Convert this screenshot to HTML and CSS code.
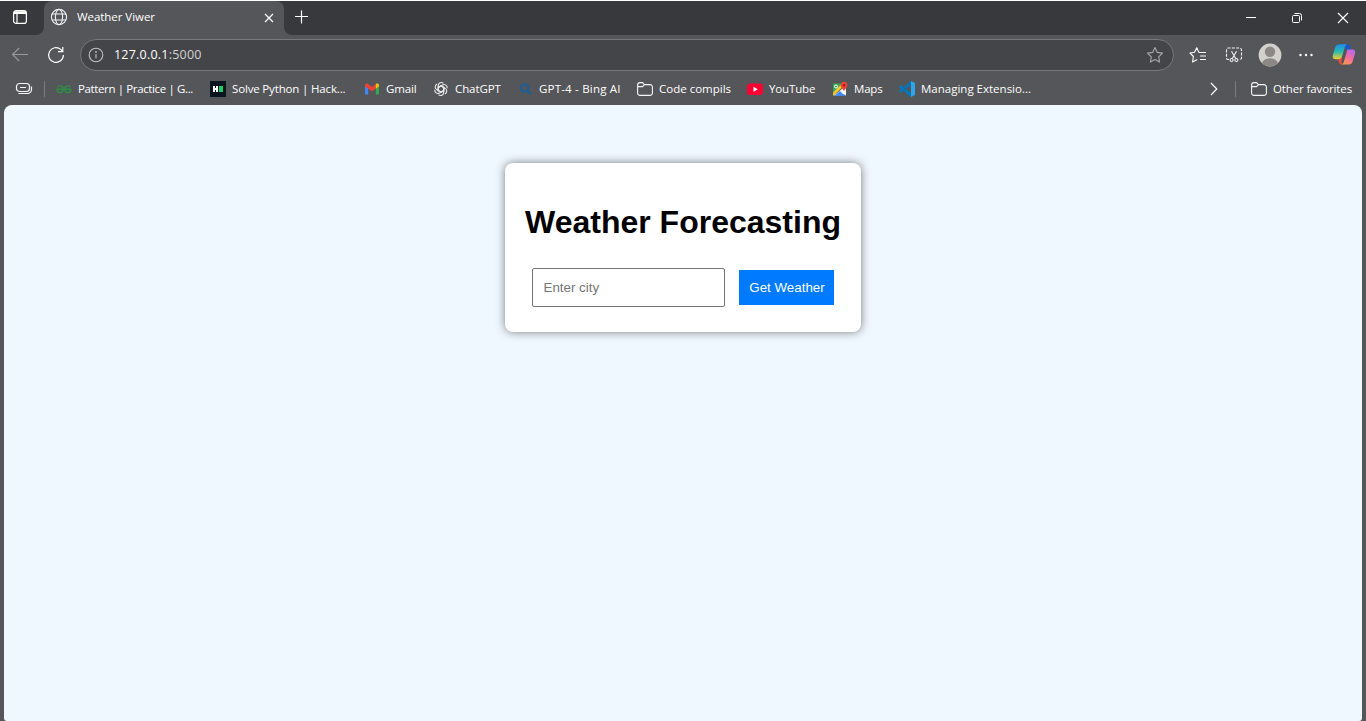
FILE: index.html
```html
<!DOCTYPE html>
<html lang="en">
<head>
<meta charset="utf-8">
<title>Weather Viwer</title>
<link rel="stylesheet" href="styles.css">
</head>
<body>
<div class="browser">
  <header class="tabstrip">
    <div class="workspaces"><svg width="16" height="16" viewBox="0 0 16 16" fill="none" stroke="#fff" stroke-width="1.2"><rect x="1.6" y="1.6" width="12.8" height="12.8" rx="2.5"/><path d="M1.6 4.5h12.8M5 4.5v10" /><path d="M2 3.2h12" stroke-width="2"/></svg></div>
    <div class="tab">
      <svg width="18" height="18" viewBox="0 0 18 18" fill="none" stroke="#f2f2f2" stroke-width="1.1"><circle cx="9" cy="9" r="7.6"/><ellipse cx="9" cy="9" rx="3.6" ry="7.6"/><path d="M2 6h14M2 12h14"/></svg>
      <span class="tab-title">Weather Viwer</span>
      <svg class="tab-close" width="10" height="10" viewBox="0 0 10 10" stroke="#fff" stroke-width="1.2"><path d="M1 1l8 8M9 1l-8 8"/></svg>
    </div>
    <svg class="new-tab" width="14" height="14" viewBox="0 0 14 14" stroke="#fff" stroke-width="1.2"><path d="M6.500 .5v13M0 6.500h13"/></svg>
    <div class="window-controls">
      <svg width="12" height="12" viewBox="0 0 12 12" stroke="#fff"><path d="M1 5.500h10"/></svg>
      <svg width="12" height="12" viewBox="0 0 12 12" fill="none" stroke="#fff"><rect x="1.5" y="3.5" width="7" height="7" rx="1"/><path d="M3.5 1.5h5a2 2 0 0 1 2 2v5"/></svg>
      <svg width="12" height="12" viewBox="0 0 12 12" stroke="#fff" stroke-width="1.2"><path d="M1 1l10 10M11 1L1 11"/></svg>
    </div>
  </header>

  <div class="toolbar">
    <svg class="back" width="18" height="16" viewBox="0 0 18 16" fill="none" stroke="#98999b" stroke-width="1.1"><path d="M17 7.5H2M8.2 1L1.5 7.5 8.2 14"/></svg>
    <svg class="reload" width="18" height="18" viewBox="0 0 18 18" fill="none" stroke="#fff" stroke-width="1.2"><path d="M16.4 9A7.4 7.4 0 1 1 13.8 3.4L15.5 5.3"/><path d="M15.8 1v4.6h-4.8"/></svg>
    <div class="address">
      <svg width="16" height="16" viewBox="0 0 16 16" fill="none" stroke="#bfc0c1" stroke-width="1.1"><circle cx="8" cy="8" r="6.8"/><path d="M8 7v4.3"/><circle cx="8" cy="4.9" r=".4"/></svg>
      <span class="url">127.0.0.1<span class="port">:5000</span></span>
      <svg class="star" width="18" height="18" viewBox="0 0 18 18" fill="none" stroke="#a7a8aa" stroke-width="1.1" stroke-linejoin="round"><path d="M9 1.5l2.3 4.9 5.2.7-3.8 3.700.9 5.300L9 13.600l-4.600 2.500.9-5.300L1.500 7.100l5.200-.7z"/></svg>
    </div>
    <div class="actions">
      <svg width="18" height="18" viewBox="0 0 18 18" fill="none" stroke="#fff" stroke-width="1.1" stroke-linejoin="round" stroke-linecap="round"><path d="M11 6.500h5.500M11.500 10h5M11.500 13.500h5M10.500 6.300L9.700 6.100 7.800 1.800 5.500 6.300 1 7l3.400 3.500-.8 5.500 4.200-2.300"/></svg>
      <svg width="18" height="18" viewBox="0 0 18 18" fill="none" stroke="#f2f2f2" stroke-width="1.1"><path d="M4 13.500H3.200A1.700 1.700 0 0 1 1.500 12V4a2 2 0 0 1 2-2h11a2 2 0 0 1 2 2v8a1.700 1.700 0 0 1-1.700 1.500H14" stroke-dasharray="3 1.300"/><path d="M6.500 5.200l4.200 7.300M11.500 5.200l-4.200 7.300"/><circle cx="6.600" cy="14" r="1.500"/><circle cx="11.400" cy="14" r="1.500"/></svg>
      <svg width="24" height="24" viewBox="0 0 24 24"><defs><clipPath id="avatar"><circle cx="12" cy="12" r="11.200"/></clipPath></defs><circle cx="12" cy="12" r="11.400" fill="#d3d1ce"/><g clip-path="url(#avatar)" fill="#8b8885"><circle cx="12" cy="8.800" r="5.200"/><ellipse cx="12" cy="20.500" rx="7.800" ry="5.300"/></g></svg>
      <svg width="16" height="6" viewBox="0 0 16 6" fill="#fff"><circle cx="2.500" cy="3" r="1.200"/><circle cx="8" cy="3" r="1.200"/><circle cx="13.500" cy="3" r="1.200"/></svg>
      <svg width="24" height="24" viewBox="0 0 24 24"><defs><linearGradient id="cool" x1="0" y1="0" x2="0" y2="1"><stop offset="0" stop-color="#1b8ff0"/><stop offset=".5" stop-color="#28bdad"/><stop offset="1" stop-color="#f4cf32"/></linearGradient><linearGradient id="warm" x1=".7" y1="0" x2=".2" y2="1"><stop offset="0" stop-color="#b869f2"/><stop offset=".5" stop-color="#f56b9b"/><stop offset="1" stop-color="#ff9a4a"/></linearGradient></defs><path d="M12.500 1.500h3c1.700 0 2.200 1.400 2.700 3l.6 2h-5z" fill="#1557cf"/><path d="M5.500 1.800Q6 1.200 7.500 1.200h7.500c-1.500.5-2 2-2.400 3.500L10 13.700c-.5 1.600-1.300 2.500-3 2.500H3.500c-3 0-3.200-2.200-2.500-4.700L3.200 4.500C3.700 3 4.300 2.200 5.500 1.800z" fill="url(#cool)"/><path d="M6 16.200c2.400 0 3.400-1 4-2.500l-.6 6c.6 1.300 1.200 1.800 2.700 1.800H9.500c-2 0-2.300-1.500-2.700-3z" fill="#ee4a42"/><path d="M15.500 6.500h5c2.800 0 3 2.200 2.400 4.500l-2.200 7.200c-.7 2.300-1.700 3.300-3.700 3.300H9.500c1.500-.4 2-1.700 2.500-3.300l2.500-8.500c.4-1.400.5-2.700 1-3.200z" fill="url(#warm)"/></svg>
    </div>
  </div>

  <nav class="favorites">
    <svg class="stack" width="18" height="14" viewBox="0 0 18 14" fill="none" stroke="#f5f5f5" stroke-width="1.200"><rect x="1.500" y="1.500" width="13" height="8" rx="3"/><path d="M5 5.500h6M3.500 11.500h9a4 4 0 0 0 4-4V4.500"/></svg>
    <i class="divider"></i>
    <a class="fav f-pattern"><svg width="16" height="16" viewBox="0 0 16 16" fill="none" stroke="#2f8d46" stroke-width="1.500"><path d="M1.500 5.500Q7.200 3.500 7.200 8Q7 11.500 4 11.500Q1.300 11.500 1 8.300H15Q14.700 11.500 12 11.500Q9 11.500 8.800 8Q8.800 3.500 14.500 5.500"/></svg><span>Pattern | Practice | G...</span></a>
    <a class="fav f-python"><svg width="16" height="16" viewBox="0 0 16 16"><path fill="#0b151f" d="M0 0h16v16H0z"/><path fill="#fff" d="M3 5h2v2h1V5h2v6H6V9H5v2H3z"/><path fill="#1fce65" d="M9 5h4v6H9z"/></svg><span>Solve Python | Hack...</span></a>
    <a class="fav f-gmail"><svg width="16" height="16" viewBox="0 0 16 16"><path fill="#4285f4" d="M1 4l3.200 2.200v7.300H2q-1 0-1-1z"/><path fill="#34a853" d="M15 4l-3.200 2.200v7.300H14q1 0 1-1z"/><path fill="#ea4335" d="M1 4.500C1 2.500 2.800 2 4.200 3L8 6l3.800-3v4.500L8 10.300 1 5.500z"/><path fill="#fbbc04" d="M11.800 3C13.200 2 15 2.500 15 4.500v.8l-3.200 2.400z"/></svg><span>Gmail</span></a>
    <a class="fav f-chat"><svg width="16" height="16" viewBox="0 0 16 16" fill="none" stroke="#e9e9e9" stroke-width="1.100"><defs><path id="petal" d="M5.300 9.600V4.600C5.300 2 8.300.7 10.400 2.200M5.300 6.400L8 4.800l3.800 2.200"/></defs><use href="#petal"/><use href="#petal" transform="rotate(60 8 8)"/><use href="#petal" transform="rotate(120 8 8)"/><use href="#petal" transform="rotate(180 8 8)"/><use href="#petal" transform="rotate(240 8 8)"/><use href="#petal" transform="rotate(300 8 8)"/></svg><span>ChatGPT</span></a>
    <a class="fav f-bing"><svg width="16" height="16" viewBox="0 0 16 16" fill="none" stroke="#1261a3" stroke-width="1.800"><circle cx="6.700" cy="7" r="3.700"/><path d="M9.200 9.500l3.500 3.500"/></svg><span>GPT-4 - Bing AI</span></a>
    <a class="fav f-code"><svg width="16" height="16" viewBox="0 0 16 16" fill="none" stroke="#f5f5f5" stroke-width="1.100"><path d="M.6 4A2.400 2.400 0 0 1 3 1.600h2.500l2 2H13A2.400 2.400 0 0 1 15.400 6v6a2.400 2.400 0 0 1-2.400 2.400H3A2.400 2.400 0 0 1 .6 12zM.6 5.600h4.900l2-2"/></svg><span>Code compils</span></a>
    <a class="fav f-youtube"><svg width="16" height="16" viewBox="0 0 16 16"><rect y="2.500" width="16" height="11.500" rx="3" fill="#ff0033"/><path fill="#fff" d="M6.500 5.800v5l4.200-2.500z"/></svg><span>YouTube</span></a>
    <a class="fav f-maps"><svg width="16" height="16" viewBox="0 0 16 16"><path fill="#34a853" d="M1 2.500h12L2 14H1z"/><path fill="#e8eaed" d="M3 15L14 5v10L9 9.500z"/><path fill="#f5c52c" d="M1 11.500L10 2.500l2 2L2 14.500H1z"/><path fill="#fff" d="M2 14.800l10-8.500 2 7z"/><path fill="#4285f4" d="M2.500 15L8 10l5 5z"/><circle cx="4" cy="5.500" r="1.500" fill="none" stroke="#fff"/><path fill="#ea4335" d="M12 .8a3.500 3.500 0 0 1 3.300 4.500C14.800 7 12.800 8 12 10.300 11.200 8 9.200 7 8.700 5.300A3.500 3.500 0 0 1 12 .8z"/><circle cx="12" cy="4.200" r="1.200" fill="#9d1d17"/></svg><span>Maps</span></a>
    <a class="fav f-code-ext"><svg width="16" height="16" viewBox="0 0 16 16"><path fill="#0877b9" d="M0 5.400l1.500-1.300L12 12v4L0 6.300z"/><path fill="#0873b5" d="M0 10.600l1.500 1.300L12 4V0L0 9.700z"/><path fill="#29a6ee" d="M12 0l4 1.900v12.200L12 16z"/></svg><span>Managing Extensio...</span></a>
    <svg class="more" width="10" height="14" viewBox="0 0 10 14" fill="none" stroke="#fff" stroke-width="1.200"><path d="M2 1l5.800 6L2 13"/></svg>
    <i class="divider second"></i>
    <a class="fav f-other"><svg width="16" height="16" viewBox="0 0 16 16" fill="none" stroke="#f5f5f5" stroke-width="1.100"><path d="M.6 4A2.400 2.400 0 0 1 3 1.600h2.500l2 2H13A2.400 2.400 0 0 1 15.400 6v6a2.400 2.400 0 0 1-2.400 2.400H3A2.400 2.400 0 0 1 .6 12zM.6 5.600h4.900l2-2"/></svg><span>Other favorites</span></a>
  </nav>

  <main class="page">
    <section class="card">
      <h1>Weather Forecasting</h1>
      <form class="search">
        <input type="text" placeholder="Enter city">
        <button type="button">Get Weather</button>
      </form>
    </section>
  </main>
</div>
</body>
</html>
```
FILE: styles.css
```css
* { box-sizing: border-box; }
body { margin: 0; overflow: hidden; }
svg { display: block; flex: none; }
.browser {
  height: 721px;
  display: flex;
  flex-direction: column;
  border-top: 1px solid #fff;
  background: #55565a;
  color: #fff;
  font-family: "Open Sans", "Noto Sans", sans-serif;
  font-size: 11.5px;
}
.tabstrip {
  flex: none;
  height: 34px;
  display: flex;
  align-items: stretch;
  background: linear-gradient(#38393c 0 17px, #55565a 17px);
}
.workspaces {
  width: 44px;
  padding: 8px 12px;
  background: #38393c;
  border-bottom-right-radius: 8px;
}
.tab {
  width: 240px;
  padding: 0 10px 2px 6px;
  display: flex;
  align-items: center;
  background: #55565a;
  border-radius: 8px 8px 0 0;
}
.tab-title { margin: -2px 0 0 9px; letter-spacing: -.05px; white-space: nowrap; }
.tab-close { margin: 1px 0 0 auto; }
.new-tab {
  box-sizing: content-box;
  padding: 9px 0 11px 11px;
  width: 14px;
  background: #38393c;
  border-bottom-left-radius: 8px;
}
.window-controls {
  flex: 1;
  margin-left: -1px;
  padding-right: 17px;
  display: flex;
  justify-content: flex-end;
  align-items: center;
  gap: 34px;
  background: #38393c;
}
.toolbar { flex: none; height: 40px; display: flex; align-items: center; }
.back { margin-left: 11px; }
.reload { margin-left: 18px; }
.address {
  flex: none;
  width: 1094px;
  height: 32px;
  margin-left: 15px;
  padding: 0 9px 0 7px;
  display: flex;
  align-items: center;
  background: #444548;
  border: 1px solid #77787b;
  border-radius: 16px;
}
.url { margin: -1px 0 0 10px; font-size: 12.5px; letter-spacing: .22px; }
.port { color: #d2d2d3; }
.star { margin-left: auto; }
.actions {
  flex: 1;
  padding: 0 10px 0 15px;
  display: flex;
  align-items: center;
  gap: 16px;
}
.actions svg:nth-child(2) { margin: 0 -1px 0 2px; }
.actions svg:nth-child(5) { margin-left: auto; }
.favorites { flex: none; height: 30px; padding: 0 0 2px 15px; display: flex; align-items: center; }
.divider { width: 1px; height: 16px; margin: 0 11px; background: #7b7c7f; flex: none; }
.fav { display: flex; align-items: center; gap: 6px; white-space: nowrap; flex: none; }
.fav span { margin-top: -2px; }
.f-pattern { width: 154px; letter-spacing: -.37px; }
.f-python { width: 154px; letter-spacing: -.16px; }
.f-gmail { width: 69px; letter-spacing: -.15px; }
.f-chat { width: 84px; letter-spacing: -.1px; }
.f-bing { width: 120px; letter-spacing: .2px; }
.f-bing svg { margin-left: 1px; margin-right: -1px; }
.f-code { width: 110px; }
.f-youtube { width: 85px; letter-spacing: -.15px; }
.f-maps { width: 67px; letter-spacing: -.2px; }
.f-code-ext { width: 132px; }
.more { margin-left: auto; }
.divider.second { margin: 0 15px 0 16px; }
.f-other { width: 115px; letter-spacing: -.12px; }
.page {
  flex: 1;
  margin: 0 4px;
  padding-top: 58px;
  background: #f0f8ff;
  border-radius: 8px 8px 3px 3px;
  color: #000;
  font-family: "Liberation Sans", Arial, sans-serif;
}
.card {
  width: 356px;
  height: 169px;
  margin: 0 auto;
  padding: 41px 20px 0;
  border-radius: 8px;
  background: #fff;
  box-shadow: 0 0 10px rgba(0, 0, 0, .5);
}
h1 { margin: 0; font-size: 32px; line-height: 37px; text-align: center; white-space: nowrap; }
.search { display: flex; align-items: center; justify-content: center; gap: 14px; margin-top: 27px; }
input {
  width: 193px;
  height: 39px;
  padding: 0 10.5px;
  border: 1px solid #767676;
  border-radius: 2px;
  font: 13.333px "Liberation Sans", Arial, sans-serif;
}
input::placeholder { color: #757575; }
button {
  width: 95px;
  height: 35px;
  padding: 0 0 0 1px;
  border: 0;
  background: #007bff;
  color: #fff;
  font: 13.333px "Liberation Sans", Arial, sans-serif;
}
```
